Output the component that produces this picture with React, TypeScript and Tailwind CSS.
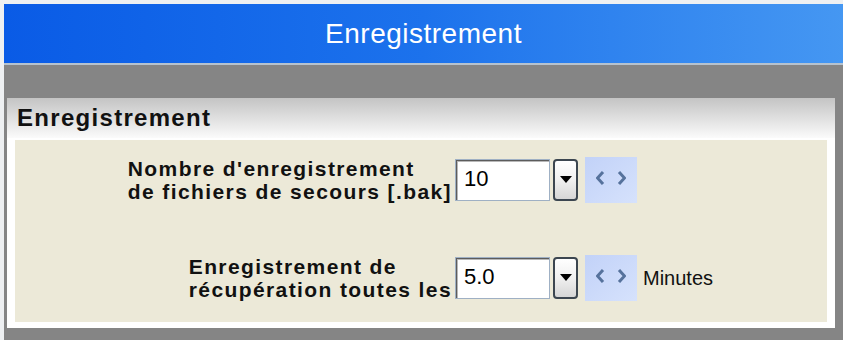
import React from 'react'

function Chevron({ dir }: { dir: 'left' | 'right' }) {
  return (
    <svg width="9" height="14" viewBox="0 0 9 14" className="block">
      {dir === 'left' ? (
        <path d="M7 1 L1.5 7 L7 13" fill="none" stroke="#56729c" strokeWidth="3" />
      ) : (
        <path d="M2 1 L7.5 7 L2 13" fill="none" stroke="#56729c" strokeWidth="3" />
      )}
    </svg>
  )
}

function ComboField({ value }: { value: string }) {
  return (
    <div className="flex items-center">
      {/* text box */}
      <div className="w-[95px] h-[42px] bg-white border border-[#9fb0c4] shadow-[inset_1px_1px_0_#5c5c5c,inset_2px_2px_0_#b8b8b8] pl-[8px] pt-[8px] text-[22px] leading-[22px] text-black font-['Liberation_Sans',Arial,sans-serif]">
        {value}
      </div>
      {/* dropdown */}
      <div className="ml-[3px] w-[25px] h-[42px] rounded-[4px] border-2 border-[#3c4650] bg-gradient-to-b from-white via-[#f0f0f0] to-[#d6d6d6] flex justify-center pt-[15px]">
        <svg width="12" height="7" viewBox="0 0 12 7" className="block">
          <path d="M0 0 H12 L6 7 Z" fill="#000" />
        </svg>
      </div>
      {/* spinner */}
      <div className="ml-[7px] w-[52px] h-[46px] bg-gradient-to-br from-[#c2d2f8] to-[#d6e2fc] flex items-center justify-center gap-[12px] pb-[4px]">
        <Chevron dir="left" />
        <Chevron dir="right" />
      </div>
    </div>
  )
}

function SettingRow({ lines, value, unit }: { lines: string[]; value: string; unit?: string }) {
  return (
    <div className="flex items-center h-[46px]">
      <div className="w-[440px] flex justify-end pr-[3px]">
        <div className="text-[21px] leading-[23px] font-bold tracking-[1.4px] text-[#111]">
          {lines.map((l) => (
            <div key={l} className="whitespace-nowrap">{l}</div>
          ))}
        </div>
      </div>
      <ComboField value={value} />
      {unit && <span className="ml-[6px] text-[20px] text-[#111]">{unit}</span>}
    </div>
  )
}

export default function App() {
  return (
    <div className="w-[843px] h-[340px] bg-[#eef0f2] pl-[4px] pt-[4px] flex flex-col overflow-hidden font-['Liberation_Sans',Arial,sans-serif]">
      {/* Title bar */}
      <div className="h-[59px] flex-shrink-0 bg-gradient-to-r from-[#0a5be6] via-[#1c72ec] to-[#4597f2] flex items-center justify-center">
        <span className="text-white text-[28px] tracking-[0.5px]">Enregistrement</span>
      </div>
      <div className="h-[2px] flex-shrink-0 bg-[#b6c2ce]" />

      {/* Gray area */}
      <div className="flex-1 bg-[#858585] pt-[33px] pl-[3px] pr-[8px] pb-[12px]">
        <div className="h-full bg-white flex flex-col pb-[6px]">
          <div className="h-[40px] flex-shrink-0 bg-gradient-to-b from-[#c4c4c4] to-[#fbfbfb] flex items-center pl-[10px] text-[24px] font-bold tracking-[1.3px] text-[#111]">
            Enregistrement
          </div>
          <div className="flex-1 mx-[8px] mt-[2px] bg-[#ece9d8] flex flex-col pt-[17px] gap-[52px]">
            <SettingRow lines={["Nombre d'enregistrement", 'de fichiers de secours [.bak]']} value="10" />
            <SettingRow lines={['Enregistrement de', 'récupération toutes les']} value="5.0" unit="Minutes" />
          </div>
        </div>
      </div>
    </div>
  )
}
